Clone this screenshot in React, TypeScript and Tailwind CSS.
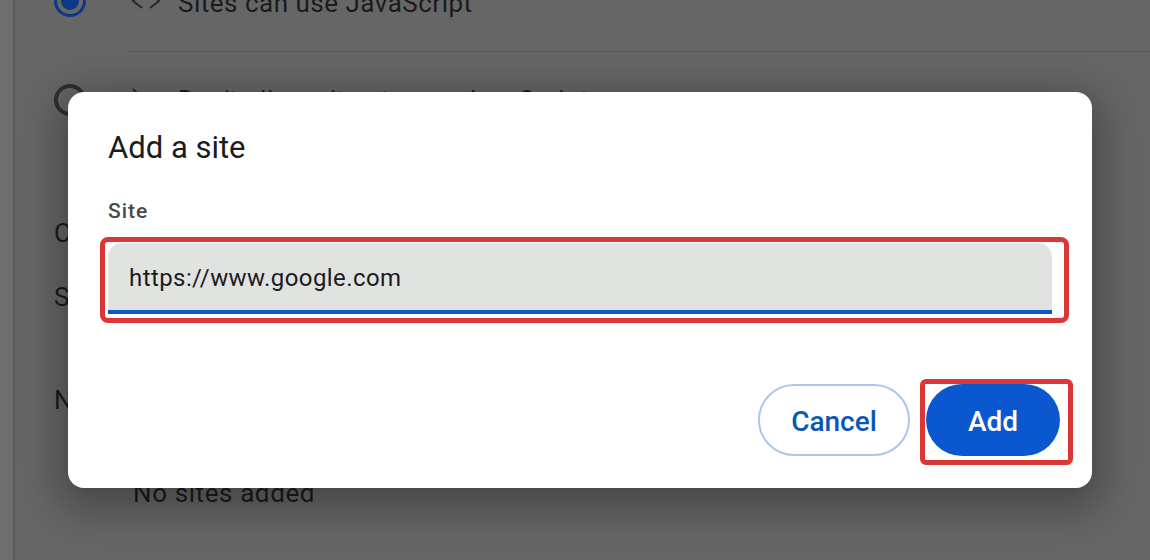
export default function App() {
  return (
    <div className="relative h-[560px] w-[1150px] overflow-hidden bg-[#666666] font-['Roboto',sans-serif]">
      {/* page behind the dialog */}
      <div className="flex h-full">
        <div className="w-[15px] shrink-0 border-r-2 border-[#5a5a5a] bg-[#6e6e6e]" />
        <div className="flex-1 pl-[39px] text-[#1b1b1c]">
          <div className="-mt-[17px] flex h-[36px] items-center">
            <div className="flex h-[32px] w-[32px] shrink-0 items-center justify-center rounded-full border-[3px] border-[#0a3a85]">
              <div className="h-[18px] w-[18px] rounded-full bg-[#0a3a85]" />
            </div>
            <svg className="ml-[44px] shrink-0" width="32" height="20" viewBox="0 0 32 20" fill="none" stroke="#2a2a2a" strokeWidth="2">
              <path d="M12 3 3 10l9 7M20 3l9 7-9 7" />
            </svg>
            <span className="ml-[16px] mt-[4px] whitespace-nowrap text-[26px] tracking-[0.5px]">Sites can use JavaScript</span>
          </div>
          <div className="ml-[73px] mt-[32px] h-px bg-[#5a5a5a]" />
          <div className="mt-[30px] flex h-[36px] items-center">
            <div className="h-[32px] w-[32px] shrink-0 rounded-full border-[4px] border-[#2f2f2f]" />
            <svg className="ml-[44px] -mt-[8px] shrink-0" width="32" height="20" viewBox="0 0 32 20" fill="none" stroke="#2a2a2a" strokeWidth="2">
              <path d="M3 3l7 7-7 7" />
            </svg>
            <span className="ml-[16px] whitespace-nowrap text-[26px] tracking-[0.5px]">Don't allow sites to use JavaScript</span>
          </div>
          <div className="mt-[100px] text-[26px] leading-[30px]">Customized behaviors</div>
          <div className="mt-[34px] text-[26px] leading-[30px]">Sites listed below</div>
          <div className="mt-[73px] text-[26px] leading-[30px]">Not allowed to use JavaScript</div>
          <div className="ml-[79px] mt-[63px] text-[26px] leading-[30px] tracking-[0.6px]">No sites added</div>
        </div>
      </div>

      {/* dialog */}
      <div className="absolute inset-0 pl-[68px] pt-[92px]">
        <div className="h-[396px] w-[1024px] rounded-[16px] bg-white pl-[40px] pr-[40px] pt-[38px] shadow-[0_12px_40px_10px_rgba(0,0,0,0.3)]">
          <h2 className="text-[31px] font-normal leading-[36px] text-[#1c1c1d]">Add a site</h2>
          <label className="mt-[32px] block text-[21px] font-medium leading-[26px] tracking-[1px] text-[#47484a]">Site</label>
          <div className="relative mt-[19px]">
            <div className="flex h-[71px] w-[944px] items-center rounded-t-[14px] border-b-[4px] border-[#0b57d0] bg-[#e1e3e1] pl-[21px] pt-[2px] text-[24px] tracking-[0.42px] text-[#1c1c1d]">
              https://www.google.com
            </div>
            <div className="absolute -left-[8px] -top-[6px] h-[86px] w-[969px] rounded-[8px] border-[5px] border-[#dc3737]" />
          </div>
          <div className="mt-[70px] flex justify-end gap-[16px]">
            <button className="h-[72px] w-[152px] rounded-full border-2 border-[#abc7ec] bg-white pt-[3px] text-[28px] font-medium text-[#0b57b8]">Cancel</button>
            <div className="relative -mr-[8px]">
              <button className="h-[72px] w-[134px] rounded-full bg-[#0b57d0] pt-[3px] text-[28px] font-medium text-white">Add</button>
              <div className="absolute -left-[6px] -top-[5px] h-[86px] w-[153px] rounded-[6px] border-[5px] border-[#dc3737]" />
            </div>
          </div>
        </div>
      </div>
    </div>
  );
}
